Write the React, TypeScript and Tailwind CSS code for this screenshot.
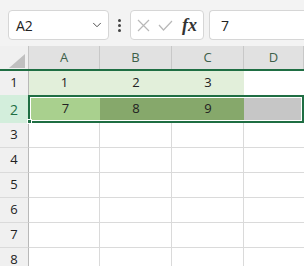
import { ChevronDown } from 'lucide-react';

const cols = [
  { label: 'A', w: 'w-[71px]' },
  { label: 'B', w: 'w-[72px]' },
  { label: 'C', w: 'w-[72px]' },
  { label: 'D', w: 'flex-1' },
];

export default function App() {
  return (
    <div className="w-[304px] h-[266px] overflow-hidden bg-white font-['Open_Sans',sans-serif] text-[13px] text-[#222]">
      {/* Toolbar */}
      <div className="h-[46px] bg-[#f3f3f3] flex items-start pt-[10px] pl-[8px] gap-0">
        <div className="w-[101px] h-[30px] bg-white border border-[#d6d6d6] rounded-[4px] flex items-center justify-between pl-[7px] pr-[4px]">
          <span className="text-[14px] text-[#222]">A2</span>
          <ChevronDown size={14} strokeWidth={1.6} className="text-[#444]" />
        </div>
        <div className="w-[21px] h-[30px] flex flex-col items-center justify-center gap-[2px]">
          <span className="w-[3px] h-[3px] rounded-full bg-[#444]"></span>
          <span className="w-[3px] h-[3px] rounded-full bg-[#444]"></span>
          <span className="w-[3px] h-[3px] rounded-full bg-[#444]"></span>
        </div>
        <div className="w-[74px] h-[30px] bg-white border border-[#d6d6d6] rounded-[4px] flex items-center pl-[6px] gap-[8px]">
          <svg width="13" height="13" viewBox="0 0 13 13" fill="none" stroke="#b8b8b8" strokeWidth="1.2">
            <path d="M1 1 L12 12 M12 1 L1 12" />
          </svg>
          <svg width="15" height="11" viewBox="0 0 15 11" fill="none" stroke="#b8b8b8" strokeWidth="1.2">
            <path d="M1 5 L5.5 10 L14 1" />
          </svg>
          <span className="font-['Liberation_Serif',serif] italic font-semibold text-[18px] text-[#333] leading-none ml-[1px]">fx</span>
        </div>
        <div className="ml-[5px] flex-1 h-[30px] bg-white border border-[#d6d6d6] rounded-l-[4px] border-r-0 flex items-center pl-[11px]">
          <span className="text-[14px]">7</span>
        </div>
      </div>

      {/* Column headers */}
      <div className="flex h-[25px] border-b-2 border-[#1f6e43]">
        <div className="w-[29px] bg-[#f0f0f0] border-r border-[#c4c4c4] flex items-end justify-end pr-[3px] pb-[1px]">
          <div className="w-0 h-0 border-l-[16px] border-l-transparent border-b-[14px] border-b-[#c0c0c0]"></div>
        </div>
        {cols.map((c) => (
          <div
            key={c.label}
            className={`${c.w} bg-[#e1e1e1] border-r border-[#c8c8c8] flex items-center justify-center text-[#3d5f49]`}
          >
            {c.label}
          </div>
        ))}
      </div>

      {/* Row 1 */}
      <div className="flex h-[24px]">
        <div className="w-[29px] bg-[#f0f0f0] border-r border-[#b8b8b8] flex items-center justify-center">1</div>
        <div className="w-[71px] bg-[#e2efda] flex items-center justify-center">1</div>
        <div className="w-[72px] bg-[#e2efda] flex items-center justify-center">2</div>
        <div className="w-[72px] bg-[#e2efda] flex items-center justify-center">3</div>
        <div className="flex-1"></div>
      </div>

      {/* Row 2 (selected) */}
      <div className="relative flex h-[28px]">
        <div className="w-[29px] bg-[#d3eedc] border-r border-[#b8b8b8] flex items-center justify-center text-[#1f6e43] text-[14px]">
          2
        </div>
        <div className="-ml-[1px] flex-1 border-2 border-[#1f6e43] p-[1px] bg-white flex">
          <div className="w-[69px] bg-[#a9d08e] flex items-center justify-center">7</div>
          <div className="w-[72px] bg-[#86a86b] flex items-center justify-center">8</div>
          <div className="w-[72px] bg-[#86a86b] flex items-center justify-center">9</div>
          <div className="flex-1 bg-[#c6c6c6]"></div>
        </div>
        <div className="absolute left-[27px] bottom-[-1px] w-[5px] h-[5px] bg-[#1f6e43] border border-white"></div>
      </div>

      {/* Empty rows */}
      {[3, 4, 5, 6, 7, 8].map((n) => (
        <div key={n} className="flex h-[25px]">
          <div className="w-[29px] bg-[#f0f0f0] border-r border-[#b8b8b8] border-b border-b-[#dadada] flex items-center justify-center">
            {n}
          </div>
          <div className="w-[71px] border-r border-b border-[#dadada]"></div>
          <div className="w-[72px] border-r border-b border-[#dadada]"></div>
          <div className="w-[72px] border-r border-b border-[#dadada]"></div>
          <div className="flex-1 border-b border-[#dadada]"></div>
        </div>
      ))}
    </div>
  );
}
